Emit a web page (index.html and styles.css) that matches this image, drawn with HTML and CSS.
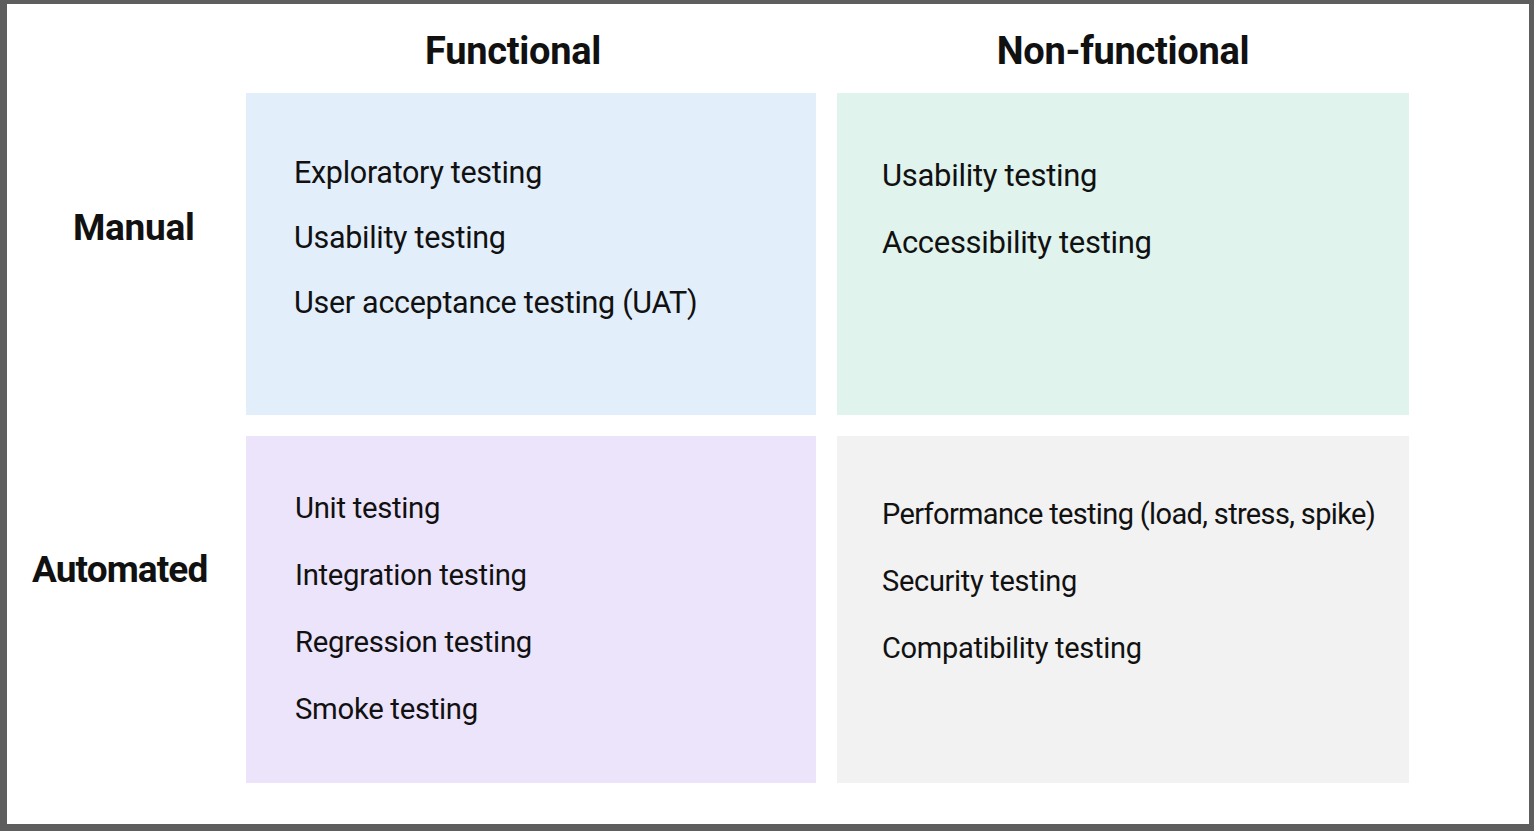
FILE: index.html
```html
<!DOCTYPE html>
<html lang="en">
<head>
<meta charset="utf-8">
<title>Testing types matrix</title>
<link rel="stylesheet" href="styles.css">
</head>
<body>
<main class="panel">
  <div class="corner"></div>
  <h2 class="col-head col-head--functional">Functional</h2>
  <h2 class="col-head">Non-functional</h2>

  <div class="row-head row-head--manual">Manual</div>
  <ul class="cell cell--blue">
    <li>Exploratory testing</li>
    <li>Usability testing</li>
    <li>User acceptance testing (UAT)</li>
  </ul>
  <ul class="cell cell--green">
    <li>Usability testing</li>
    <li>Accessibility testing</li>
  </ul>

  <div class="row-head row-head--automated">Automated</div>
  <ul class="cell cell--purple">
    <li>Unit testing</li>
    <li>Integration testing</li>
    <li>Regression testing</li>
    <li>Smoke testing</li>
  </ul>
  <ul class="cell cell--gray">
    <li class="tight">Performance testing (load, stress, spike)</li>
    <li>Security testing</li>
    <li>Compatibility testing</li>
  </ul>
</main>
</body>
</html>
```

FILE: styles.css
```css
html, body {
  margin: 0;
  padding: 0;
}

body {
  background: #5e5e5e;
  font-family: Roboto, "Liberation Sans", sans-serif;
  color: #111111;
  padding: 4px 5px 7px 7px;
  box-sizing: border-box;
  height: 831px;
}

.panel {
  background: #ffffff;
  height: 820px;
  display: grid;
  grid-template-columns: 218px 570px 572px;
  grid-template-rows: 68px 322px 347px;
  column-gap: 21px;
  row-gap: 21px;
}

.col-head {
  margin: 0;
  font-size: 38px;
  font-weight: 700;
  text-align: center;
  padding-top: 25px;
  line-height: 44px;
  letter-spacing: -0.3px;
}

.col-head--functional {
  padding-right: 36px;
}

.row-head {
  font-size: 37px;
  font-weight: 700;
  line-height: 44px;
  letter-spacing: -0.3px;
}

.row-head--manual {
  padding-top: 113px;
  padding-left: 66px;
}

.row-head--automated {
  padding-top: 112px;
  padding-left: 25px;
  letter-spacing: -0.9px;
}

.cell {
  list-style: none;
  margin: 0;
  font-size: 29px;
  letter-spacing: -0.3px;
}

.cell--blue {
  background: #e3eefb;
  padding: 47px 0 0 48px;
  line-height: 65px;
  font-size: 30.5px;
}

.cell--green {
  background: #e0f3ed;
  padding: 49px 0 0 45px;
  line-height: 67px;
  font-size: 31px;
}

.cell--purple {
  background: #ece4fa;
  padding: 39px 0 0 49px;
  line-height: 67px;
  font-size: 29.3px;
}

.cell--gray {
  background: #f2f2f2;
  padding: 45px 0 0 45px;
  line-height: 67px;
}

.tight {
  letter-spacing: -0.65px;
}
```
